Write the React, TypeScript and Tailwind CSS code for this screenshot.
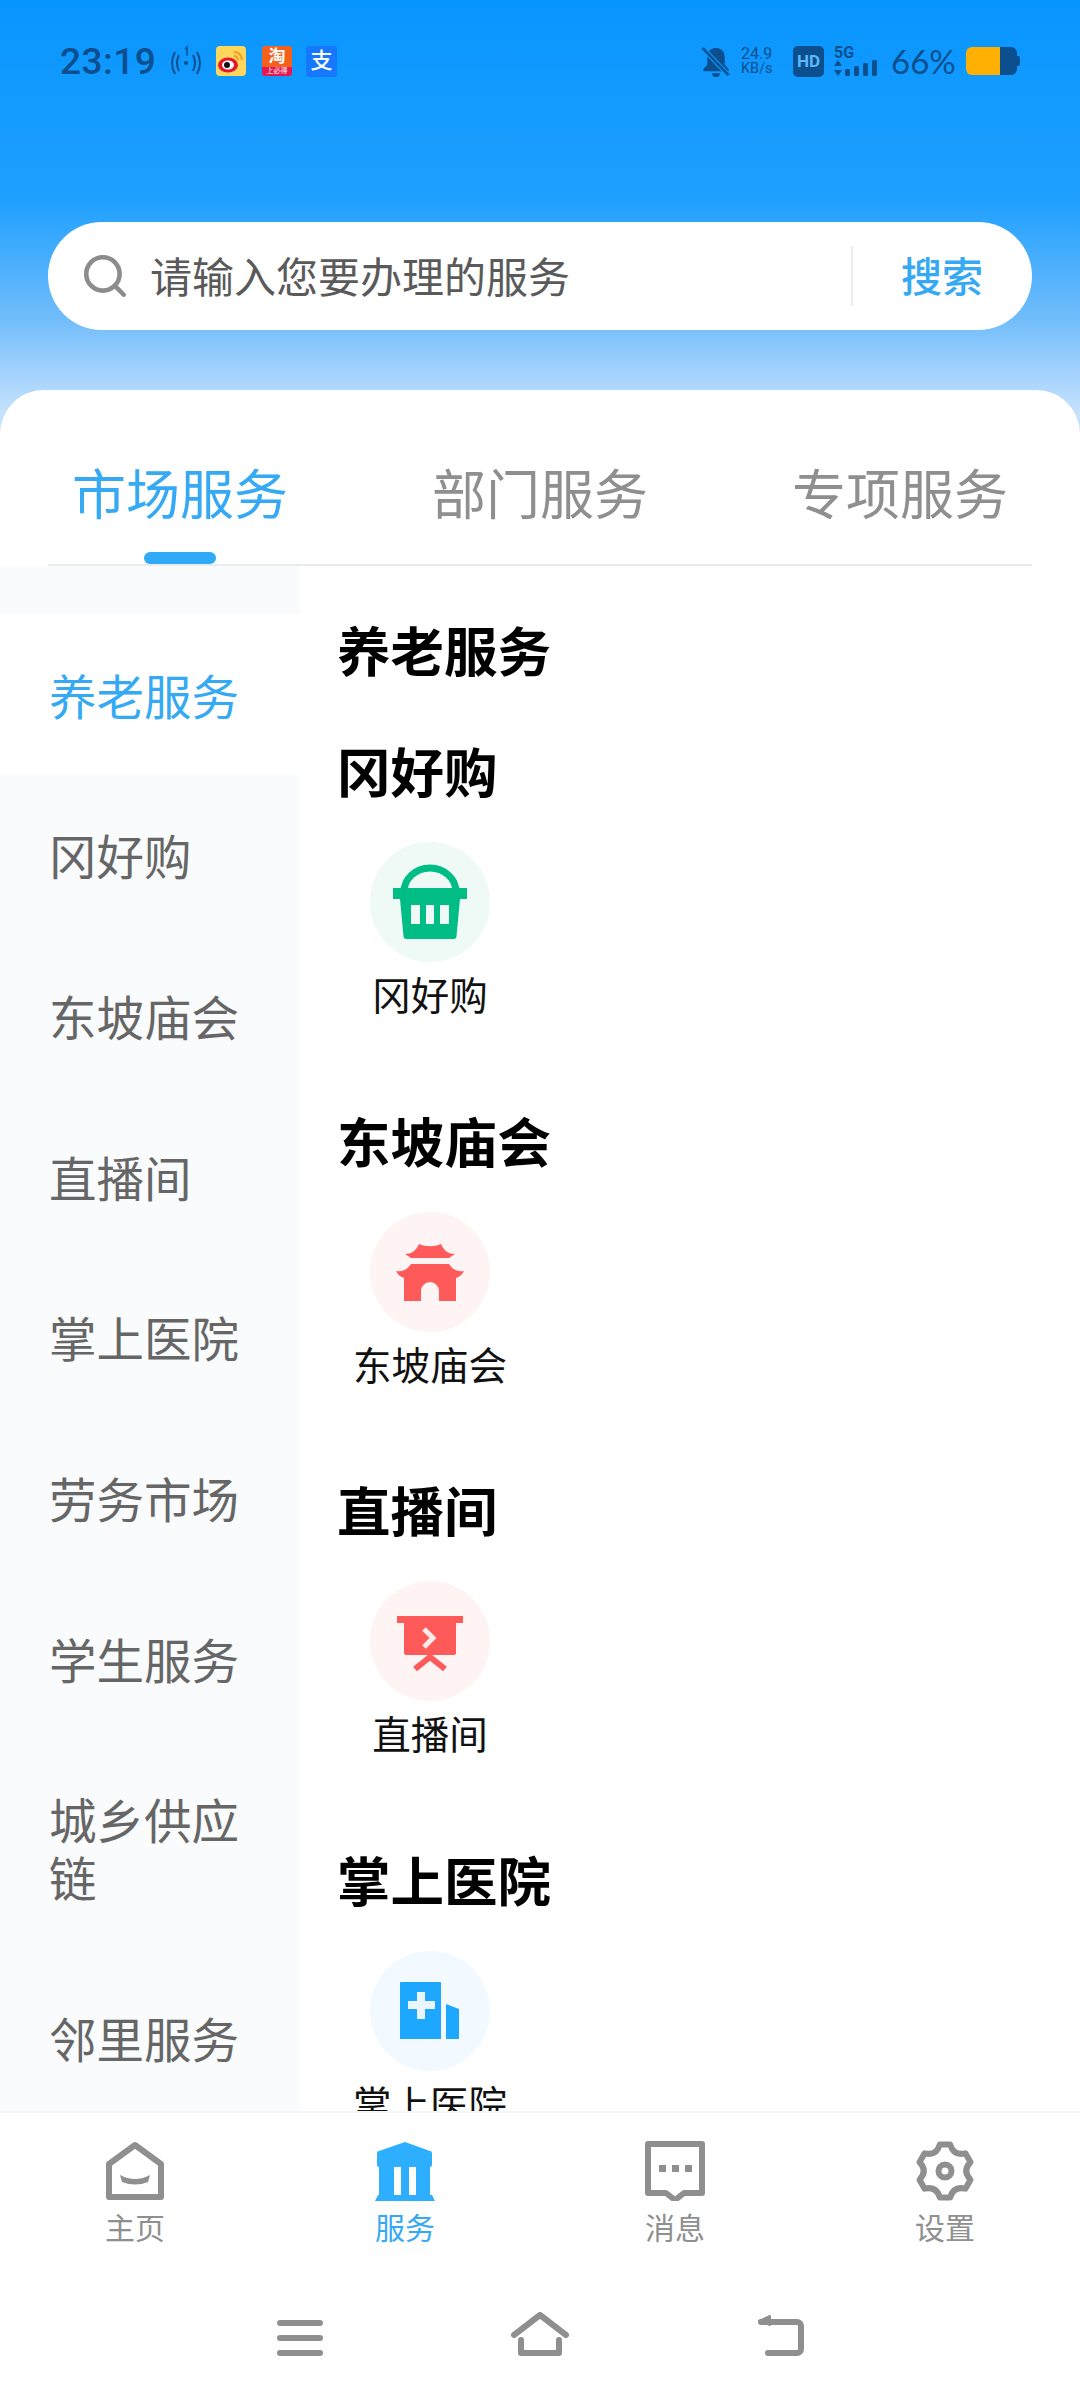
import { Search } from "lucide-react";

const sideItems = ["养老服务", "冈好购", "东坡庙会", "直播间", "掌上医院", "劳务市场", "学生服务", "城乡供应链", "邻里服务"];

function BasketIcon() {
  return (
    <svg viewBox="0 0 120 120" className="h-[120px] w-[120px]">
      <circle cx="60" cy="60" r="60" fill="#effaf7" />
      <path d="M34 50a26 24 0 0 1 52 0" fill="none" stroke="#00bd85" strokeWidth="7" />
      <rect x="23" y="46" width="74" height="11" fill="#00bd85" />
      <path
        fillRule="evenodd"
        fill="#00bd85"
        d="M30 57h60l-3.500 37a3 3 0 0 1-3 3h-47a3 3 0 0 1-3-3zM41 63v19h9V63zM56 63v19h8V63zM70 63v19h9V63z"
      />
    </svg>
  );
}

function TempleIcon() {
  return (
    <svg viewBox="0 0 120 120" className="h-[120px] w-[120px]">
      <circle cx="60" cy="60" r="60" fill="#fff4f4" />
      <path fill="#ff5a5a" d="M35 42c6 0 11-3 14-10 7 3 15 3 22 0 3 7 8 10 14 10l-6 4H41z" />
      <path
        fill="#ff5a5a"
        d="M26 59c6 1 11-1 15-7h38c4 6 9 8 15 7-2 4-5 6-8 7v23H69V79a9 9 0 0 0-18 0v10H34V66c-3-1-6-3-8-7z"
      />
    </svg>
  );
}

function LiveIcon() {
  return (
    <svg viewBox="0 0 120 120" className="h-[120px] w-[120px]">
      <circle cx="60" cy="60" r="60" fill="#fff4f4" />
      <rect x="27" y="35" width="66" height="7" fill="#ff5a5a" />
      <path fill="#ff5a5a" d="M34 42h52v30a2 2 0 0 1-2 2H36a2 2 0 0 1-2-2z" />
      <path d="M54 48l9 9-9 9" fill="none" stroke="#ffe9e9" strokeWidth="5" />
      <path d="M45 88l15-12 15 12" fill="none" stroke="#ff5a5a" strokeWidth="6" />
    </svg>
  );
}

function HospitalIcon() {
  return (
    <svg viewBox="0 0 120 120" className="h-[120px] w-[120px]">
      <circle cx="60" cy="60" r="60" fill="#f2f9ff" />
      <path fill="#1ea7ff" d="M30 32a1 1 0 0 1 1-1h39a1 1 0 0 1 1 1v56H30zM76 53l13 5v30H76z" />
      <path fill="#e9f6ff" d="M47 41h8v9h10v8H55v10h-8V58H38v-8h9z" />
    </svg>
  );
}

const sections = [
  { title: "冈好购", icon: <BasketIcon /> },
  { title: "东坡庙会", icon: <TempleIcon /> },
  { title: "直播间", icon: <LiveIcon /> },
  { title: "掌上医院", icon: <HospitalIcon /> },
];

function gearPath() {
  const c = 30;
  const pt = (deg: number, r: number) => {
    const a = ((deg - 90) * Math.PI) / 180;
    return `${(c + r * Math.cos(a)).toFixed(1)} ${(c + r * Math.sin(a)).toFixed(1)}`;
  };
  let d = `M${pt(-11, 27)}`;
  for (let i = 0; i < 6; i++) {
    const base = i * 60;
    d += `L${pt(base + 11, 27)}Q${pt(base + 30, 17)} ${pt(base + 49, 27)}`;
  }
  return d + "Z";
}

function StatusBar() {
  const ink = "#0b4f8e";
  return (
    <div className="flex h-[34px] items-center pl-[60px] pr-[60px] text-[#0b4f8e]">
      <span className="w-[96px] text-[37px] font-medium leading-none tracking-[0.5px]">23:19</span>
      <svg viewBox="0 0 34 32" className="ml-[13px] h-[32px] w-[34px]" fill="none" stroke={ink} strokeWidth="2">
        <circle cx="17" cy="18" r="2" fill={ink} stroke="none" />
        <path d="M10 10q-4 8 0 16M24 10q4 8 0 16M6 7q-6 11 0 22M28 7q6 11 0 22" />
        <path d="M16 4l2-2v9" strokeWidth="1.500" />
      </svg>
      <svg viewBox="0 0 30 30" className="ml-[13px] h-[30px] w-[30px]">
        <rect width="30" height="30" rx="4" fill="#ffd65c" />
        <ellipse cx="12" cy="19" rx="10" ry="7.500" fill="#e6162d" />
        <ellipse cx="12" cy="19" rx="6" ry="4.500" fill="#fff" />
        <circle cx="11" cy="19" r="3" fill="#111" />
        <path d="M18 6q7 0 8 8M18 10q3 0 4 4" fill="none" stroke="#f59a23" strokeWidth="2" />
      </svg>
      <div className="ml-[16px] flex h-[30px] w-[30px] flex-col items-center">
        <span className="h-[21px] w-full rounded-t-[3px] bg-[#f5601c] text-center text-[17px] font-bold leading-[21px] text-white">淘</span>
        <span className="h-[9px] w-full rounded-b-[3px] bg-[#e8174f] text-center text-[7px] leading-[9px] text-white">上必得</span>
      </div>
      <div className="ml-[14px] flex h-[31px] w-[31px] items-center justify-center rounded-[3px] bg-[#1677ff] text-[22px] font-medium leading-none text-white">
        支
      </div>
      <div className="flex-1" />
      <svg viewBox="0 0 30 32" className="h-[31px] w-[30px]" fill={ink}>
        <path d="M15 2c6 0 9 4 9 10v7l4 5v2H2v-2l4-5v-7C6 6 9 2 15 2zM11 28h8a4 4 0 0 1-8 0z" />
        <path d="M1 2l27 28" stroke="#0a95ff" strokeWidth="5" />
        <path d="M1 2l27 28" stroke={ink} strokeWidth="2.500" />
      </svg>
      <div className="ml-[10px] flex w-[39px] flex-col text-[16px] leading-[15.500px]">
        <span>24.9</span>
        <span className="text-[14.500px]">KB/s</span>
      </div>
      <div className="ml-[13px] flex h-[31px] w-[31px] items-center justify-center rounded-[5px] bg-[#0b4f8e] text-[17px] font-bold leading-none text-[#5db8f7]">
        HD
      </div>
      <div className="ml-[10px] flex h-[32px] w-[45px] flex-col">
        <span className="text-[16px] font-bold leading-[15px]">5G</span>
        <svg viewBox="0 0 45 17" className="h-[17px] w-[45px]" fill={ink}>
          <path d="M4 0l4 6H0zM0 10h8l-4 6z" />
          <rect x="11" y="9" width="5" height="7" rx="1.500" />
          <rect x="20" y="6" width="5" height="10" rx="1.500" />
          <rect x="29" y="3" width="5" height="13" rx="1.500" />
          <rect x="38" y="0" width="5" height="16" rx="1.500" />
        </svg>
      </div>
      <span className="ml-[12px] w-[63px] font-['Lato',sans-serif] text-[33px] leading-none">66%</span>
      <div className="ml-[12px] flex h-[28px] w-[51px] overflow-hidden rounded-[6px]">
        <div className="w-[34px] bg-[#ffb000]" />
        <div className="flex-1 bg-[#0b4f8e]" />
      </div>
      <div className="h-[10px] w-[3px] rounded-r-[2px] bg-[#0b4f8e]" />
    </div>
  );
}

export default function App() {
  return (
    <div className="flex h-[2400px] w-[1080px] flex-col overflow-hidden bg-[linear-gradient(180deg,#0795ff_0px,#1fa0ff_200px,#72bdfb_320px,#c4e1fd_410px)] font-[Roboto,'Noto_Sans_CJK_SC',sans-serif]">
      <div className="h-[390px] shrink-0 pt-[44px]">
        <StatusBar />
        <div className="mx-[48px] mt-[144px] flex h-[108px] items-center rounded-full bg-white pl-[32px]">
          <Search className="h-[50px] w-[50px] text-[#8c8c8c]" strokeWidth={2.2} />
          <span className="ml-[20px] pt-[5px] text-[42px] leading-none text-[#5a5a5a]">请输入您要办理的服务</span>
          <div className="flex-1" />
          <div className="h-[60px] w-[2px] bg-[#ececec]" />
          <span className="ml-[48px] mr-[49px] pt-[4px] text-[41px] font-medium leading-none text-[#35a9f3]">搜索</span>
        </div>
      </div>

      <div className="flex min-h-0 flex-1 flex-col overflow-hidden rounded-t-[44px] bg-white">
        <div className="grid h-[174px] shrink-0 grid-cols-3 pt-[77px] text-[54px] leading-[60px]">
          <div className="flex flex-col items-center text-[#35a9f3]">
            <span>市场服务</span>
            <div className="mt-[25px] h-[12px] w-[72px] rounded-full bg-[#2faaf9]" />
          </div>
          <span className="text-center text-[#8f8f8f]">部门服务</span>
          <span className="text-center text-[#8f8f8f]">专项服务</span>
        </div>
        <div className="mx-[48px] h-[2px] shrink-0 bg-[#e9ebef]" />

        <div className="flex min-h-0 flex-1 overflow-hidden">
          <div className="w-[300px] shrink-0 bg-[#fafbfd] pt-[48px]">
            {sideItems.map((item, i) => (
              <div
                key={item}
                className={
                  i === 0
                    ? "bg-white pb-[47.200px] pl-[49px] pr-[50px] pt-[55.500px] text-[47.500px] leading-[58px] text-[#35a9f3]"
                    : "pb-[47.200px] pl-[49px] pr-[50px] pt-[55.500px] text-[47.500px] leading-[58px] text-[#666666]"
                }
              >
                {item}
              </div>
            ))}
          </div>

          <div className="min-w-0 flex-1 pl-[37px] pt-[53px]">
            <h2 className="h-[70px] text-[53.500px] font-bold leading-[70px] text-black">养老服务</h2>
            <div className="mt-[51px] flex flex-col">
              {sections.map((s) => (
                <section key={s.title} className="h-[369.500px] shrink-0">
                  <h2 className="h-[70px] text-[53.500px] font-bold leading-[70px] text-black">{s.title}</h2>
                  <div className="mt-[32px] flex w-[186px] flex-col items-center">
                    {s.icon}
                    <span className="mt-[10px] whitespace-nowrap text-[38.500px] leading-[50px] text-[#111111]">{s.title}</span>
                  </div>
                </section>
              ))}
            </div>
          </div>
        </div>

        <div className="h-[289px] shrink-0 border-t-2 border-[#f5f6f8] bg-white pt-[28px]">
          <div className="grid grid-cols-4 text-[30px] leading-[40px] text-[#8f8f8f]">
            <div className="flex flex-col items-center">
              <svg viewBox="0 0 60 60" className="h-[60px] w-[60px]">
                <path d="M30 4l26 19v33H4V23z" fill="none" stroke="#8f8f8f" strokeWidth="6" strokeLinejoin="round" />
                <path d="M15 34q15 8 30 0l-2 7q-13 5-26 0z" fill="#8f8f8f" />
              </svg>
              <span className="mt-[8px]">主页</span>
            </div>
            <div className="flex flex-col items-center text-[#35a9f3]">
              <svg viewBox="0 0 60 60" className="h-[60px] w-[60px]">
                <path fill="#2eaeff" d="M30 1l25 9a2 2 0 0 1 2 2v12a2 2 0 0 1-2 2v28h2l3 6H0l3-6h1V26a2 2 0 0 1-2-2V12a2 2 0 0 1 2-2z" />
                <path fill="#ffffff" d="M19 26h7v28h-7zM34 26h7v28h-7z" />
              </svg>
              <span className="mt-[8px]">服务</span>
            </div>
            <div className="flex flex-col items-center">
              <svg viewBox="0 0 60 60" className="h-[60px] w-[60px]">
                <path d="M3 3h54v49H39l-9 7-9-7H3z" fill="none" stroke="#8f8f8f" strokeWidth="6" strokeLinejoin="round" />
                <path d="M14 24h7v7h-7zM27 24h7v7h-7zM40 24h7v7h-7z" fill="#8f8f8f" />
              </svg>
              <span className="mt-[8px]">消息</span>
            </div>
            <div className="flex flex-col items-center">
              <svg viewBox="0 0 60 60" className="h-[60px] w-[60px]">
                <path d={gearPath()} fill="none" stroke="#8f8f8f" strokeWidth="6" strokeLinejoin="round" />
                <circle cx="30" cy="30" r="6.500" fill="none" stroke="#8f8f8f" strokeWidth="6" />
              </svg>
              <span className="mt-[8px]">设置</span>
            </div>
          </div>

          <div className="mt-[63px] flex h-[44px] items-end">
            <div className="ml-[277px] flex h-[36px] w-[46px] flex-col justify-between">
              <div className="h-[6px] rounded-full bg-[#8f8f8f]" />
              <div className="h-[6px] rounded-full bg-[#8f8f8f]" />
              <div className="h-[6px] rounded-full bg-[#8f8f8f]" />
            </div>
            <svg viewBox="0 0 58 44" className="ml-[188px] h-[44px] w-[58px]" fill="none" stroke="#8f8f8f" strokeWidth="6" strokeLinecap="round" strokeLinejoin="round">
              <path d="M3 23L29 3l26 20M10 28v13h38V28" />
            </svg>
            <svg viewBox="0 0 48 44" className="ml-[187px] h-[44px] w-[48px]" fill="none" stroke="#8f8f8f" strokeWidth="6" strokeLinecap="round" strokeLinejoin="round">
              <path d="M12 41h29a4 4 0 0 0 4-4V14a4 4 0 0 0-4-4H5" />
              <path d="M3 9l11-5v9z" fill="#8f8f8f" strokeWidth="2" />
            </svg>
          </div>
        </div>
      </div>
    </div>
  );
}
